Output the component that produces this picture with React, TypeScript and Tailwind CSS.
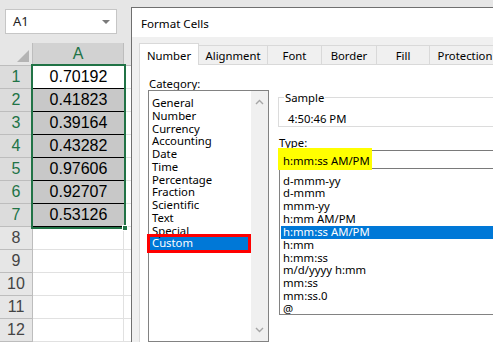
const categories = [
  "General",
  "Number",
  "Currency",
  "Accounting",
  "Date",
  "Time",
  "Percentage",
  "Fraction",
  "Scientific",
  "Text",
  "Special",
  "Custom",
];

const types = [
  "d-mmm-yy",
  "d-mmm",
  "mmm-yy",
  "h:mm AM/PM",
  "h:mm:ss AM/PM",
  "h:mm",
  "h:mm:ss",
  "m/d/yyyy h:mm",
  "mm:ss",
  "mm:ss.0",
  "@",
];

const values = ["0.70192", "0.41823", "0.39164", "0.43282", "0.97606", "0.92707", "0.53126"];

const tabs = [
  { label: "Number", w: "w-[60px]" },
  { label: "Alignment", w: "w-[70px]" },
  { label: "Font", w: "w-[55px]" },
  { label: "Border", w: "w-[56px]" },
  { label: "Fill", w: "w-[54px]" },
  { label: "Protection", w: "w-[72px]" },
];

function Chevron({ up }: { up?: boolean }) {
  return (
    <svg width="9" height="6" viewBox="0 0 9 6" className="block">
      <path
        d={up ? "M1 5 L4.5 1.5 L8 5" : "M1 1 L4.5 4.5 L8 1"}
        fill="none"
        stroke="#a6a6a6"
        strokeWidth="1.4"
      />
    </svg>
  );
}

function Sheet() {
  return (
    <div className="flex w-[131px] shrink-0 flex-col font-['Liberation_Sans',sans-serif]">
      {/* name box */}
      <div className="h-[43px] pl-[5px] pt-[9px]">
        <div className="flex h-[25px] w-[112px] items-center justify-between border border-[#c6c6c6] bg-white pl-[7px] pr-[6px] font-['Noto_Sans',sans-serif] text-[13px] text-[#222]">
          <span>A1</span>
          <svg width="8" height="4" viewBox="0 0 8 4">
            <path d="M0 0 L8 0 L4 4 Z" fill="#7a7a7a" />
          </svg>
        </div>
      </div>

      <div className="flex">
        {/* row headers */}
        <div className="flex w-[33px] flex-col">
          <div className="relative h-[23px] border-b border-r border-[#bdbdbd] bg-[#e6e6e6]">
            <svg width="12" height="12" viewBox="0 0 12 12" className="absolute bottom-[3px] right-[3px]">
              <path d="M12 0 L12 12 L0 12 Z" fill="#b4b4b4" />
            </svg>
          </div>
          {Array.from({ length: 12 }, (_, i) => (
            <div
              key={i}
              className={
                i < 7
                  ? "flex h-[23px] items-center justify-center border-b border-r border-[#bdbdbd] bg-[#dcdcdc] text-[16px] text-[#217346]"
                  : "flex h-[23px] items-center justify-center border-b border-r border-[#bdbdbd] bg-[#e6e6e6] text-[16px] text-[#444]"
              }
            >
              {i + 1}
            </div>
          ))}
        </div>

        {/* column A */}
        <div className="flex w-[91px] flex-col">
          <div className="flex h-[23px] items-center justify-center border-b border-r border-[#bdbdbd] bg-[#d2d2d2] text-[16px] text-[#217346]">
            A
          </div>
          <div className="relative outline-2 outline-[#217346]">
            {values.map((v, i) => (
              <div
                key={v}
                className={
                  i === 0
                    ? "flex h-[23px] items-center justify-center border-b border-black bg-white text-[16px] text-black"
                    : "flex h-[23px] items-center justify-center border-b border-black bg-[#c8c8c8] text-[16px] text-black"
                }
              >
                {v}
              </div>
            ))}
            <span className="absolute -bottom-[4px] -right-[4px] h-[6px] w-[6px] border border-white bg-[#217346]" />
          </div>
          {Array.from({ length: 5 }, (_, i) => (
            <div key={i} className="h-[23px] border-b border-r border-[#e1e1e1] bg-white" />
          ))}
        </div>

        {/* column B sliver */}
        <div className="flex w-[7px] flex-col">
          <div className="h-[23px] border-b border-[#bdbdbd] bg-[#e6e6e6]" />
          {Array.from({ length: 12 }, (_, i) => (
            <div key={i} className="h-[23px] border-b border-[#e1e1e1] bg-white" />
          ))}
        </div>
      </div>
    </div>
  );
}

function Dialog() {
  return (
    <div className="mt-[7px] flex w-[400px] shrink-0 flex-col border-l border-t border-[#6f6f6f] bg-[#f0f0f0] font-['Noto_Sans',sans-serif] text-[11.3px] text-black">
      <div className="flex h-[30px] items-center bg-white pl-[9px] pt-[3px] text-[11.6px]">Format Cells</div>

      {/* tabs */}
      <div className="flex h-[28px] items-end pl-[7px]">
        {tabs.map((t, i) =>
          i === 0 ? (
            <div
              key={t.label}
              className={`relative z-10 -mb-px flex h-[22px] items-center justify-center border-x border-t border-[#d9d9d9] bg-white pt-[3px] ${t.w}`}
            >
              {t.label}
            </div>
          ) : (
            <div
              key={t.label}
              className={`-ml-px flex h-[19px] items-center justify-center border border-b-0 border-[#d9d9d9] bg-[#f0f0f0] pt-[3px] ${t.w}`}
            >
              {t.label}
            </div>
          )
        )}
      </div>

      {/* panel */}
      <div className="ml-[7px] flex flex-1 gap-[9px] border-l border-t border-[#d9d9d9] bg-white pl-[8px] pt-[9px]">
        {/* category */}
        <div className="flex w-[121px] shrink-0 flex-col">
          <div className="h-[16px] pl-px pt-[2px] leading-[16px]">
            <span className="underline underline-offset-2">C</span>ategory:
          </div>
          <div className="flex h-[252px] border border-[#828282]">
            <div className="flex-1 pt-[6px]">
              {categories.map((c) =>
                c === "Custom" ? (
                  <div
                    key={c}
                    className="ml-px mr-[3px] h-[12.75px] bg-[#0078d7] pl-[2px] leading-[12.75px] text-white outline-3 outline-[#ff0000]"
                  >
                    {c}
                  </div>
                ) : (
                  <div key={c} className="h-[12.75px] pl-[3px] leading-[12.75px]">
                    {c}
                  </div>
                )
              )}
            </div>
            <div className="flex w-[17px] flex-col items-center justify-between bg-[#f0f0f0] pb-[8px] pt-[8px]">
              <Chevron up />
              <Chevron />
            </div>
          </div>
        </div>

        {/* type */}
        <div className="flex w-[260px] shrink-0 flex-col">
          <fieldset className="mt-[16px] border border-[#dcdcdc]">
            <legend className="ml-[5px] px-px leading-[15px]">Sample</legend>
            <div className="pl-[9px] pt-[6px] leading-[15px]">4:50:46 PM</div>
          </fieldset>

          <div className="mt-[6px] h-[17px] pl-px pt-[2px] leading-[16px]">
            <span className="underline underline-offset-2">T</span>ype:
          </div>

          <div className="relative h-[19px] border border-[#7a7a7a] pt-px">
            <span className="absolute -left-px -top-[3px] h-[22px] w-[94px] bg-[#ffff00]" />
            <span className="relative pl-[4px] leading-[17px]">h:mm:ss AM/PM</span>
          </div>

          <div className="ml-px h-[146px] border-x border-b border-[#828282] pt-[5.5px]">
            {types.map((t) =>
              t === "h:mm:ss AM/PM" ? (
                <div key={t} className="ml-px h-[12.85px] bg-[#0078d7] pl-[2px] leading-[12.85px] text-white">
                  {t}
                </div>
              ) : (
                <div key={t} className="h-[12.85px] pl-[3px] leading-[12.85px]">
                  {t}
                </div>
              )
            )}
          </div>
        </div>
      </div>
    </div>
  );
}

export default function App() {
  return (
    <div className="flex h-[342px] w-[493px] overflow-hidden bg-[#e6e6e6]">
      <Sheet />
      <Dialog />
    </div>
  );
}
